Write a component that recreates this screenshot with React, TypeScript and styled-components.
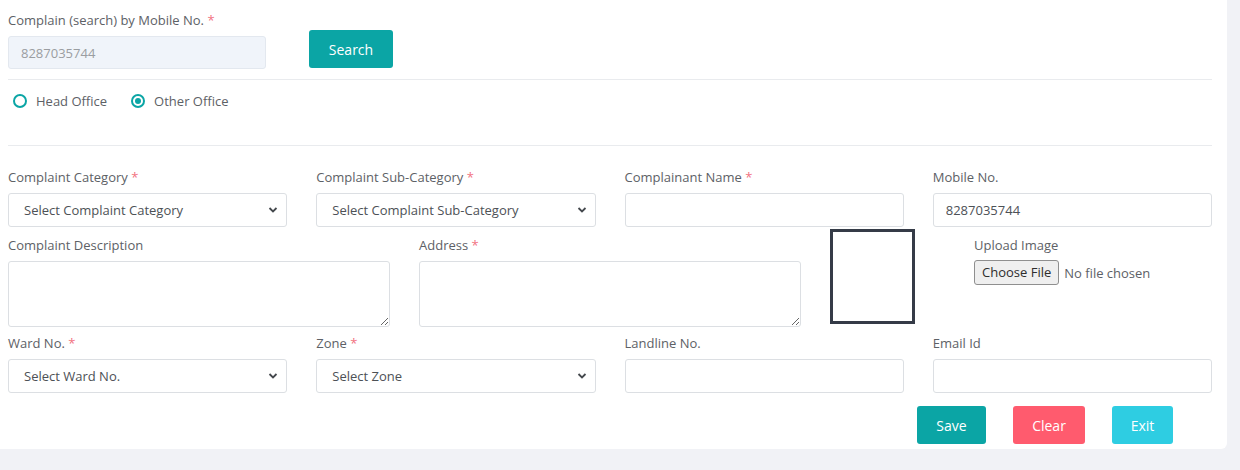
import React from 'react';
import styled, { createGlobalStyle } from 'styled-components';

const teal = '#0ba5a5';
const red = '#ff5b6e';
const cyan = '#2ecde2';
const labelColour = '#5d6166';
const borderColour = '#dcdfe3';

const GlobalStyle = createGlobalStyle`
  html, body {
    margin: 0;
    padding: 0;
    background: #f1f2f6;
    font-family: "Open Sans", "Liberation Sans", sans-serif;
  }
  * {
    box-sizing: border-box;
  }
`;

const Card = styled.div`
  width: 1227px;
  height: 449px;
  background: #ffffff;
  border-bottom-right-radius: 6px;
  padding: 10px 15px 0 8px;
`;

const Label = styled.label<{ $gap?: number }>`
  display: block;
  font-size: 13px;
  line-height: 20px;
  color: ${labelColour};
  margin-bottom: ${(p) => (p.$gap ?? 6)}px;
`;

const Star = styled.span`
  color: #f2727f;
`;

const SearchRow = styled.div`
  display: flex;
  align-items: flex-end;
  gap: 43px;
`;

const SearchInput = styled.input`
  width: 258px;
  height: 33px;
  margin-bottom: -1px;
  border: 1px solid #e3e8ef;
  border-radius: 3px;
  background: #f0f4fa;
  padding: 0 12px;
  font-family: inherit;
  font-size: 13px;
  color: #9a9da1;
`;

const Button = styled.button<{ $colour: string; $width: number }>`
  height: 38px;
  width: ${(p) => p.$width}px;
  border: none;
  border-radius: 3px;
  background: ${(p) => p.$colour};
  color: #ffffff;
  font-family: inherit;
  font-size: 14px;
  cursor: pointer;
`;

const Divider = styled.hr<{ $top?: number }>`
  border: none;
  border-top: 1px solid #e9ebee;
  margin: ${(p) => (p.$top ?? 0)}px 0 0;
  width: 1204px;
`;

const RadioRow = styled.div`
  display: flex;
  align-items: center;
  gap: 24px;
  height: 42px;
  padding-left: 5px;
  margin-bottom: 23px;
`;

const RadioOption = styled.label`
  display: flex;
  align-items: center;
  gap: 9px;
  font-size: 13px;
  color: ${labelColour};
`;

const RadioCircle = styled.span<{ $checked?: boolean }>`
  width: 14px;
  height: 14px;
  border-radius: 50%;
  border: 2px solid ${teal};
  display: flex;
  align-items: center;
  justify-content: center;

  &::after {
    content: '';
    width: 6px;
    height: 6px;
    border-radius: 50%;
    background: ${(p) => (p.$checked ? teal : 'transparent')};
  }
`;

const Grid = styled.div<{ $columns: string; $top: number }>`
  display: grid;
  grid-template-columns: ${(p) => p.$columns};
  column-gap: 29px;
  width: 1204px;
  margin-top: ${(p) => p.$top}px;
`;

const Field = styled.div``;

const TextInput = styled.input`
  width: 100%;
  height: 34px;
  border: 1px solid ${borderColour};
  border-radius: 3px;
  padding: 0 12px;
  font-family: inherit;
  font-size: 13px;
  color: #4d5156;
  background: #ffffff;
`;

const SelectWrap = styled.div`
  position: relative;
  height: 34px;
`;

const Select = styled.select`
  appearance: none;
  width: 100%;
  height: 34px;
  border: 1px solid ${borderColour};
  border-radius: 3px;
  padding: 0 15px;
  font-family: inherit;
  font-size: 13px;
  color: #4d5156;
  background: #ffffff;
`;

const Chevron = styled.svg`
  position: absolute;
  right: 9px;
  top: 13px;
  pointer-events: none;
`;

const TextArea = styled.textarea`
  display: block;
  width: 100%;
  height: 66px;
  border: 1px solid ${borderColour};
  border-radius: 3px;
  font-family: inherit;
  resize: vertical;
`;

const ImageBox = styled.div`
  width: 85px;
  height: 95px;
  border: 3px solid #353b47;
  margin-top: -6px;
`;

const UploadField = styled.div``;

const FileRow = styled.div`
  display: flex;
  align-items: center;
  gap: 5px;
  font-size: 13px;
  color: ${labelColour};
  margin-top: -1px;
`;

const FileButton = styled.span`
  display: inline-block;
  height: 25px;
  line-height: 23px;
  padding: 0 7px;
  border: 1px solid #8f8f8f;
  border-radius: 3px;
  background: #efefef;
  color: #2d2d2d;
  font-size: 13px;
`;

const ActionRow = styled.div`
  display: flex;
  gap: 27px;
  padding-left: 909px;
  margin-top: 13px;
`;

const Caret = () => (
  <Chevron width="10" height="8" viewBox="0 0 10 8">
    <path d="M1.5 2 L5 5.5 L8.5 2" fill="none" stroke="#44484d" strokeWidth="1.8" />
  </Chevron>
);

const SelectField = ({ label, placeholder }: { label: string; placeholder: string }) => (
  <Field>
    <Label>
      {label} <Star>*</Star>
    </Label>
    <SelectWrap>
      <Select defaultValue="">
        <option value="">{placeholder}</option>
      </Select>
      <Caret />
    </SelectWrap>
  </Field>
);

const InputField = ({
  label,
  required,
  value,
}: {
  label: string;
  required?: boolean;
  value?: string;
}) => (
  <Field>
    <Label>
      {label}
      {required && (
        <>
          {' '}
          <Star>*</Star>
        </>
      )}
    </Label>
    <TextInput defaultValue={value} />
  </Field>
);

export default function App() {
  return (
    <>
      <GlobalStyle />
      <Card>
        <Label $gap={0}>
          Complain (search) by Mobile No. <Star>*</Star>
        </Label>
        <SearchRow>
          <SearchInput disabled defaultValue="8287035744" />
          <Button $colour={teal} $width={84}>
            Search
          </Button>
        </SearchRow>
        <Divider $top={11} />
        <RadioRow>
          <RadioOption>
            <RadioCircle /> Head Office
          </RadioOption>
          <RadioOption>
            <RadioCircle $checked /> Other Office
          </RadioOption>
        </RadioRow>
        <Divider />

        <Grid $columns="repeat(4, 1fr)" $top={21}>
          <SelectField label="Complaint Category" placeholder="Select Complaint Category" />
          <SelectField label="Complaint Sub-Category" placeholder="Select Complaint Sub-Category" />
          <InputField label="Complainant Name" required />
          <InputField label="Mobile No." value="8287035744" />
        </Grid>

        <Grid $columns="382px 382px 115px 1fr" $top={8}>
          <Field>
            <Label>Complaint Description</Label>
            <TextArea />
          </Field>
          <Field>
            <Label>
              Address <Star>*</Star>
            </Label>
            <TextArea />
          </Field>
          <ImageBox />
          <UploadField>
            <Label>Upload Image</Label>
            <FileRow>
              <FileButton>Choose File</FileButton>
              No file chosen
            </FileRow>
          </UploadField>
        </Grid>

        <Grid $columns="repeat(4, 1fr)" $top={6}>
          <SelectField label="Ward No." placeholder="Select Ward No." />
          <SelectField label="Zone" placeholder="Select Zone" />
          <InputField label="Landline No." />
          <InputField label="Email Id" />
        </Grid>

        <ActionRow>
          <Button $colour={teal} $width={69}>
            Save
          </Button>
          <Button $colour={red} $width={72}>
            Clear
          </Button>
          <Button $colour={cyan} $width={61}>
            Exit
          </Button>
        </ActionRow>
      </Card>
    </>
  );
}
